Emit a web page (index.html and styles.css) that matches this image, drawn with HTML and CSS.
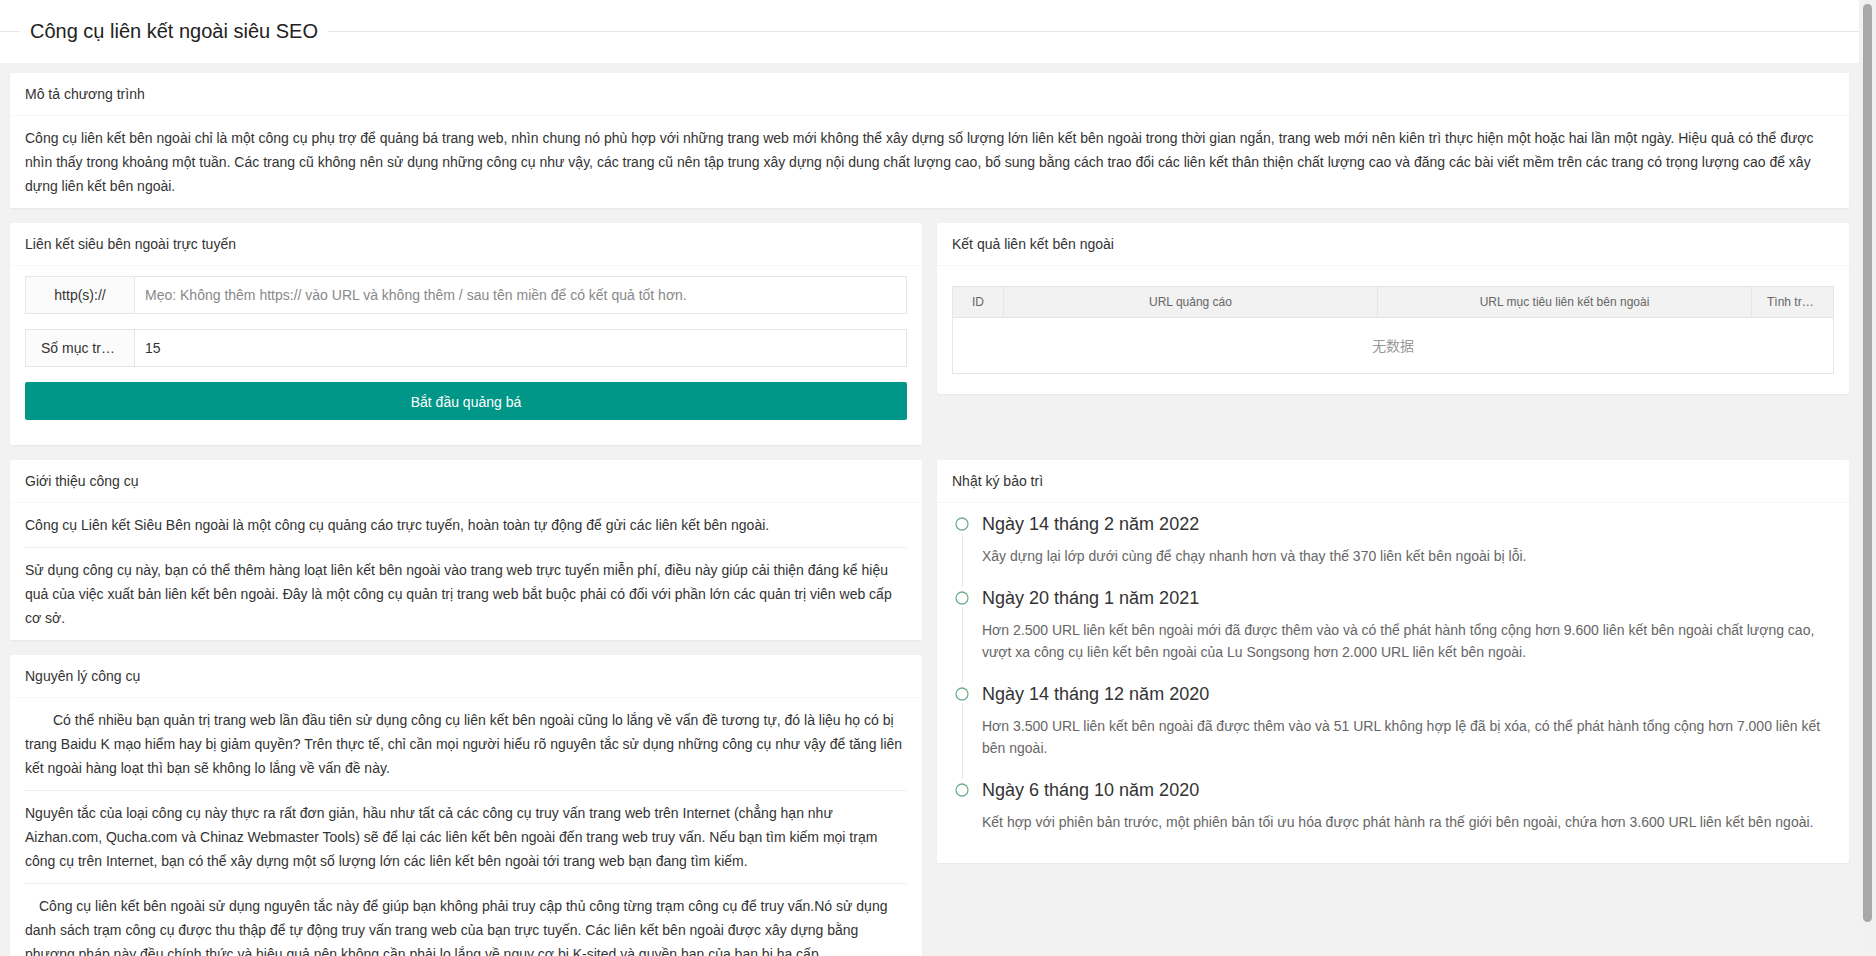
FILE: index.html
```html
<!DOCTYPE html>
<html lang="vi">
<head>
<meta charset="utf-8">
<title>Công cụ liên kết ngoài siêu SEO</title>
<link rel="stylesheet" href="styles.css">
</head>
<body>
<div class="app">
  <main class="main">
    <header class="page-head">
      <div class="page-title">
        <span class="rule rule-start"></span>
        <h1>Công cụ liên kết ngoài siêu SEO</h1>
        <span class="rule rule-fill"></span>
      </div>
    </header>

    <div class="content">
      <section class="card card-intro">
        <div class="card-header">Mô tả chương trình</div>
        <div class="card-body">
          <p>Công cụ liên kết bên ngoài chỉ là một công cụ phụ trợ để quảng bá trang web, nhìn chung nó phù hợp với những trang web mới không thể xây dựng số lượng lớn liên kết bên ngoài trong thời gian ngắn, trang web mới nên kiên trì thực hiện một hoặc hai lần một ngày. Hiệu quả có thể được nhìn thấy trong khoảng một tuần. Các trang cũ không nên sử dụng những công cụ như vậy, các trang cũ nên tập trung xây dựng nội dung chất lượng cao, bổ sung bằng cách trao đổi các liên kết thân thiện chất lượng cao và đăng các bài viết mềm trên các trang có trọng lượng cao để xây dựng liên kết bên ngoài.</p>
        </div>
      </section>

      <div class="grid">
        <section class="card">
          <div class="card-header">Liên kết siêu bên ngoài trực tuyến</div>
          <div class="card-body">
            <div class="form-item">
              <label class="form-label" for="url">http(s)://</label>
              <input class="form-input" id="url" type="text" placeholder="Mẹo: Không thêm https:// vào URL và không thêm / sau tên miền để có kết quả tốt hơn.">
            </div>
            <div class="form-item">
              <label class="form-label" for="num">Số mục trả về</label>
              <input class="form-input" id="num" type="text" value="15">
            </div>
            <button class="btn" type="button">Bắt đầu quảng bá</button>
          </div>
        </section>

        <section class="card">
          <div class="card-header">Kết quả liên kết bên ngoài</div>
          <div class="card-body">
            <table class="table">
              <colgroup>
                <col class="col-id">
                <col>
                <col>
                <col class="col-status">
              </colgroup>
              <thead>
                <tr>
                  <th>ID</th>
                  <th>URL quảng cáo</th>
                  <th>URL mục tiêu liên kết bên ngoài</th>
                  <th>Tình trạng</th>
                </tr>
              </thead>
              <tbody>
                <tr><td class="empty" colspan="4">无数据</td></tr>
              </tbody>
            </table>
          </div>
        </section>

        <div class="stack">
          <section class="card">
            <div class="card-header">Giới thiệu công cụ</div>
            <div class="card-body">
              <p>Công cụ Liên kết Siêu Bên ngoài là một công cụ quảng cáo trực tuyến, hoàn toàn tự động để gửi các liên kết bên ngoài.</p>
              <hr class="divider">
              <p>Sử dụng công cụ này, bạn có thể thêm hàng loạt liên kết bên ngoài vào trang web trực tuyến miễn phí, điều này giúp cải thiện đáng kể hiệu quả của việc xuất bản liên kết bên ngoài. Đây là một công cụ quản trị trang web bắt buộc phải có đối với phần lớn các quản trị viên web cấp cơ sở.</p>
            </div>
          </section>

          <section class="card">
            <div class="card-header">Nguyên lý công cụ</div>
            <div class="card-body">
              <p class="indent-2">Có thể nhiều bạn quản trị trang web lần đầu tiên sử dụng công cụ liên kết bên ngoài cũng lo lắng về vấn đề tương tự, đó là liệu họ có bị trang Baidu K mạo hiểm hay bị giảm quyền? Trên thực tế, chỉ cần mọi người hiểu rõ nguyên tắc sử dụng những công cụ như vậy để tăng liên kết ngoài hàng loạt thì bạn sẽ không lo lắng về vấn đề này.</p>
              <hr class="divider">
              <p>Nguyên tắc của loại công cụ này thực ra rất đơn giản, hầu như tất cả các công cụ truy vấn trang web trên Internet (chẳng hạn như Aizhan.com, Qucha.com và Chinaz Webmaster Tools) sẽ để lại các liên kết bên ngoài đến trang web truy vấn. Nếu bạn tìm kiếm mọi trạm công cụ trên Internet, bạn có thể xây dựng một số lượng lớn các liên kết bên ngoài tới trang web bạn đang tìm kiếm.</p>
              <hr class="divider">
              <p class="indent-1">Công cụ liên kết bên ngoài sử dụng nguyên tắc này để giúp bạn không phải truy cập thủ công từng trạm công cụ để truy vấn.Nó sử dụng danh sách trạm công cụ được thu thập để tự động truy vấn trang web của bạn trực tuyến. Các liên kết bên ngoài được xây dựng bằng phương pháp này đều chính thức và hiệu quả nên không cần phải lo lắng về nguy cơ bị K-sited và quyền hạn của bạn bị hạ cấp.</p>
            </div>
          </section>
        </div>

        <section class="card">
          <div class="card-header">Nhật ký bảo trì</div>
          <div class="card-body">
            <ul class="timeline">
              <li class="tl-item">
                <div class="tl-axis">
                  <svg class="tl-dot" width="14" height="14" viewBox="0 0 14 14"><circle cx="7" cy="7" r="6" fill="#fff" stroke="#72b08c" stroke-width="1.3"/></svg>
                  <span class="tl-line"></span>
                </div>
                <div class="tl-content">
                  <h3 class="tl-title">Ngày 14 tháng 2 năm 2022</h3>
                  <p class="tl-text">Xây dựng lại lớp dưới cùng để chạy nhanh hơn và thay thế 370 liên kết bên ngoài bị lỗi.</p>
                </div>
              </li>
              <li class="tl-item">
                <div class="tl-axis">
                  <svg class="tl-dot" width="14" height="14" viewBox="0 0 14 14"><circle cx="7" cy="7" r="6" fill="#fff" stroke="#72b08c" stroke-width="1.3"/></svg>
                  <span class="tl-line"></span>
                </div>
                <div class="tl-content">
                  <h3 class="tl-title">Ngày 20 tháng 1 năm 2021</h3>
                  <p class="tl-text">Hơn 2.500 URL liên kết bên ngoài mới đã được thêm vào và có thể phát hành tổng cộng hơn 9.600 liên kết bên ngoài chất lượng cao, vượt xa công cụ liên kết bên ngoài của Lu Songsong hơn 2.000 URL liên kết bên ngoài.</p>
                </div>
              </li>
              <li class="tl-item">
                <div class="tl-axis">
                  <svg class="tl-dot" width="14" height="14" viewBox="0 0 14 14"><circle cx="7" cy="7" r="6" fill="#fff" stroke="#72b08c" stroke-width="1.3"/></svg>
                  <span class="tl-line"></span>
                </div>
                <div class="tl-content">
                  <h3 class="tl-title">Ngày 14 tháng 12 năm 2020</h3>
                  <p class="tl-text">Hơn 3.500 URL liên kết bên ngoài đã được thêm vào và 51 URL không hợp lệ đã bị xóa, có thể phát hành tổng cộng hơn 7.000 liên kết bên ngoài.</p>
                </div>
              </li>
              <li class="tl-item">
                <div class="tl-axis">
                  <svg class="tl-dot" width="14" height="14" viewBox="0 0 14 14"><circle cx="7" cy="7" r="6" fill="#fff" stroke="#72b08c" stroke-width="1.3"/></svg>
                </div>
                <div class="tl-content">
                  <h3 class="tl-title">Ngày 6 tháng 10 năm 2020</h3>
                  <p class="tl-text">Kết hợp với phiên bản trước, một phiên bản tối ưu hóa được phát hành ra thế giới bên ngoài, chứa hơn 3.600 URL liên kết bên ngoài.</p>
                </div>
              </li>
            </ul>
          </div>
        </section>
      </div>
    </div>
  </main>
  <div class="scrollbar" aria-hidden="true"><div class="thumb"></div></div>
</div>
</body>
</html>
```

FILE: styles.css
```css
* { box-sizing: border-box; }

html, body {
  margin: 0;
  height: 100%;
}

body {
  font-family: "Liberation Sans", Arial, "Noto Sans CJK SC", sans-serif;
  font-size: 14px;
  color: #333;
  background: #f2f2f2;
}

.app {
  display: flex;
  height: 100vh;
  overflow: hidden;
}

.main {
  flex: 1;
  min-width: 0;
  overflow: hidden;
}

/* scrollbar lookalike */
.scrollbar {
  flex: none;
  width: 17px;
  background: #f1f1f1;
  padding: 4px 4px 0;
}

.thumb {
  width: 9px;
  height: 918px;
  background: #a8a8a8;
  border-radius: 5px;
}

/* page header */
.page-head {
  background: #fff;
  height: 63px;
  padding-top: 20px;
}

.page-title {
  display: flex;
  align-items: center;
  height: 22px;
}

.rule {
  height: 1px;
  background: #e6e6e6;
}

.rule-start { width: 20px; }
.rule-fill { flex: 1; }

.page-title h1 {
  margin: 0;
  padding: 0 10px;
  font-size: 20px;
  font-weight: 300;
  line-height: 22px;
  color: #222;
  white-space: nowrap;
}

/* content */
.content {
  padding: 10px;
}

.card {
  background: #fff;
  border-radius: 2px;
  box-shadow: 0 1px 2px 0 rgba(0, 0, 0, .05);
}

.card-intro {
  margin-bottom: 15px;
}

.card-header {
  height: 43px;
  line-height: 42px;
  padding: 0 15px;
  border-bottom: 1px solid #f6f6f6;
  color: #333;
  font-size: 14px;
}

.card-body {
  padding: 10px 15px;
  line-height: 24px;
}

.card-body p { margin: 0; }

.indent-2 { text-indent: 2em; }
.indent-1 { text-indent: 1em; }

.divider {
  height: 0;
  margin: 10px 0;
  border: 0;
  border-bottom: 1px solid #eee;
}

.grid {
  display: grid;
  grid-template-columns: 1fr 1fr;
  gap: 15px;
  align-items: start;
}

.stack {
  display: flex;
  flex-direction: column;
  gap: 15px;
}

/* form */
.form-item {
  display: flex;
  height: 38px;
  margin-bottom: 15px;
}

.form-label {
  flex: none;
  width: 110px;
  padding: 8px 15px;
  line-height: 20px;
  background: #fbfbfb;
  border: 1px solid #e6e6e6;
  text-align: center;
  white-space: nowrap;
  overflow: hidden;
  text-overflow: ellipsis;
  color: #333;
}

.form-input {
  flex: 1;
  min-width: 0;
  height: 38px;
  padding: 0 10px;
  border: 1px solid #e6e6e6;
  border-left: 0;
  background: #fff;
  font: inherit;
  color: #333;
  outline: none;
}

.form-input::placeholder {
  color: #888;
}

.btn {
  display: block;
  width: 100%;
  height: 38px;
  margin-bottom: 15px;
  border: 0;
  border-radius: 2px;
  background: #009688;
  color: #fff;
  font: inherit;
  font-size: 14px;
  line-height: 38px;
}

/* table */
.table {
  width: 100%;
  margin: 10px 0;
  border-collapse: collapse;
  table-layout: fixed;
}

.col-id { width: 51px; }
.col-status { width: 82px; }

.table th {
  height: 31px;
  padding: 0 15px;
  background: #f2f2f2;
  border: 1px solid #e6e6e6;
  font-size: 12px;
  font-weight: normal;
  color: #666;
  text-align: center;
  white-space: nowrap;
  overflow: hidden;
  text-overflow: ellipsis;
}

.table td.empty {
  height: 56px;
  border: 1px solid #e6e6e6;
  text-align: center;
  color: #999;
  font-size: 14px;
}

/* timeline */
.timeline {
  list-style: none;
  margin: 0;
  padding: 0;
}

.tl-item {
  display: grid;
  grid-template-columns: 20px 1fr;
  column-gap: 10px;
}

.tl-axis {
  display: flex;
  flex-direction: column;
  align-items: center;
}

.tl-dot {
  flex: none;
  margin-top: 4px;
  margin-bottom: 2px;
}

.tl-line {
  flex: 1;
  width: 1px;
  background: #e6e6e6;
}

.tl-content {
  padding-bottom: 20px;
}

.tl-title {
  margin: 0 0 10px;
  font-size: 18px;
  font-weight: normal;
  line-height: 22px;
  color: #333;
}

.tl-text {
  margin: 0;
  line-height: 22px;
  color: #666;
}
```
